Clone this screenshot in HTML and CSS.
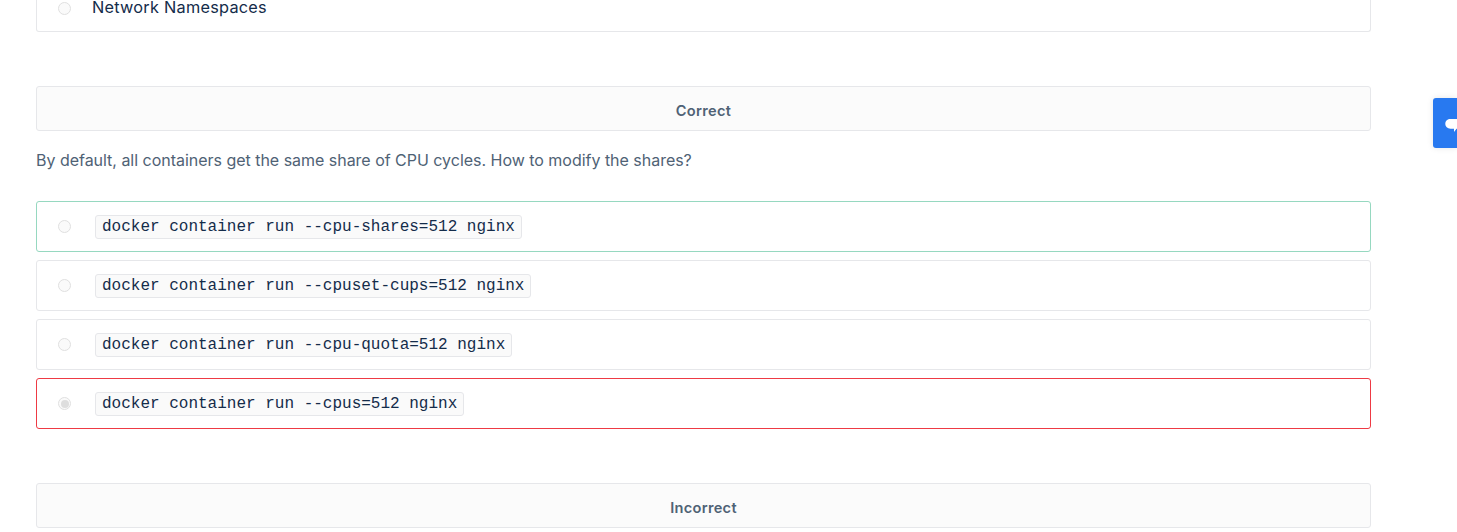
FILE: index.html
```html
<!DOCTYPE html>
<html lang="en">
<head>
<meta charset="utf-8">
<title>Quiz results</title>
<link rel="stylesheet" href="styles.css">
</head>
<body>
<main class="quiz">
  <div class="option option-cut"><span class="radio"></span><span class="label">Network Namespaces</span></div>
  <section class="question">
    <div class="result">Correct</div>
    <p class="prompt">By default, all containers get the same share of CPU cycles. How to modify the shares?</p>
    <div class="options">
      <div class="option right"><span class="radio"></span><code>docker container run --cpu-shares=512 nginx</code></div>
      <div class="option"><span class="radio"></span><code>docker container run --cpuset-cups=512 nginx</code></div>
      <div class="option"><span class="radio"></span><code>docker container run --cpu-quota=512 nginx</code></div>
      <div class="option wrong"><span class="radio checked"></span><code>docker container run --cpus=512 nginx</code></div>
    </div>
  </section>
  <section class="question">
    <div class="result">Incorrect</div>
  </section>
</main>
<div class="chat">
  <svg class="chat-icon" viewBox="0 0 16 16"><path d="M5.500 1H11C14 1 15.500 3 15.500 5.800C15.500 8.500 14 10.700 11.500 10.700L9 14V10.700H5.500C2.500 10.700 0.300 8.500 0.300 5.800C0.300 3 2.500 1 5.500 1Z" fill="#fff"/></svg>
</div>
</body>
</html>
```
FILE: styles.css
```css
* { box-sizing: border-box; }
body { margin: 0; height: 532px; overflow: hidden; background: #fff; font-family: Inter, sans-serif; font-size: 16px; color: #142c4a; }
.quiz { width: 1335px; margin-left: 36px; }
.option { display: flex; align-items: center; height: 51px; padding-left: 21px; border: 1px solid #e6e7ea; border-radius: 3px; }
.option-cut { height: 32px; padding-bottom: 16px; border-top: 0; border-radius: 0 0 3px 3px; }
.option-cut .radio { margin-top: 1px; }
.radio { flex: none; display: flex; align-items: center; justify-content: center; width: 13px; height: 13px; border: 1px solid #e0e0e0; border-radius: 50%; background: #fafafa; }
.checked::after { content: ""; width: 8px; height: 8px; border-radius: 50%; background: #dedede; }
.label { margin: 0 0 2px 21px; font-size: 16.3px; letter-spacing: .25px; line-height: 14px; }
.question { padding-top: 54px; }
.result { height: 45px; border: 1px solid #e6e7ea; border-radius: 3px; background: #fbfbfb; color: #4f6275; font-size: 14.6px; font-weight: 600; letter-spacing: .3px; line-height: 48px; text-align: center; }
.prompt { margin: 17px 0 29px; line-height: 24px; letter-spacing: -.022px; color: #4f6275; }
.options { display: flex; flex-direction: column; gap: 8px; }
.right { border-color: #96d8c0; }
.wrong { border-color: #ee3a44; }
code { height: 24px; margin-left: 24px; padding: 0 6px; border: 1px solid #e6e7ea; border-radius: 3px; background: #fafafa; font: 16px/22px "Liberation Mono", monospace; }
.chat { position: absolute; right: 0; top: 98px; width: 24px; height: 50px; padding: 20px 0 0 12px; border-radius: 3px 0 0 3px; background: #2879f0; box-shadow: 0 0 6px rgba(0, 0, 0, .1); overflow: hidden; }
.chat-icon { display: block; width: 16px; height: 16px; }
```
